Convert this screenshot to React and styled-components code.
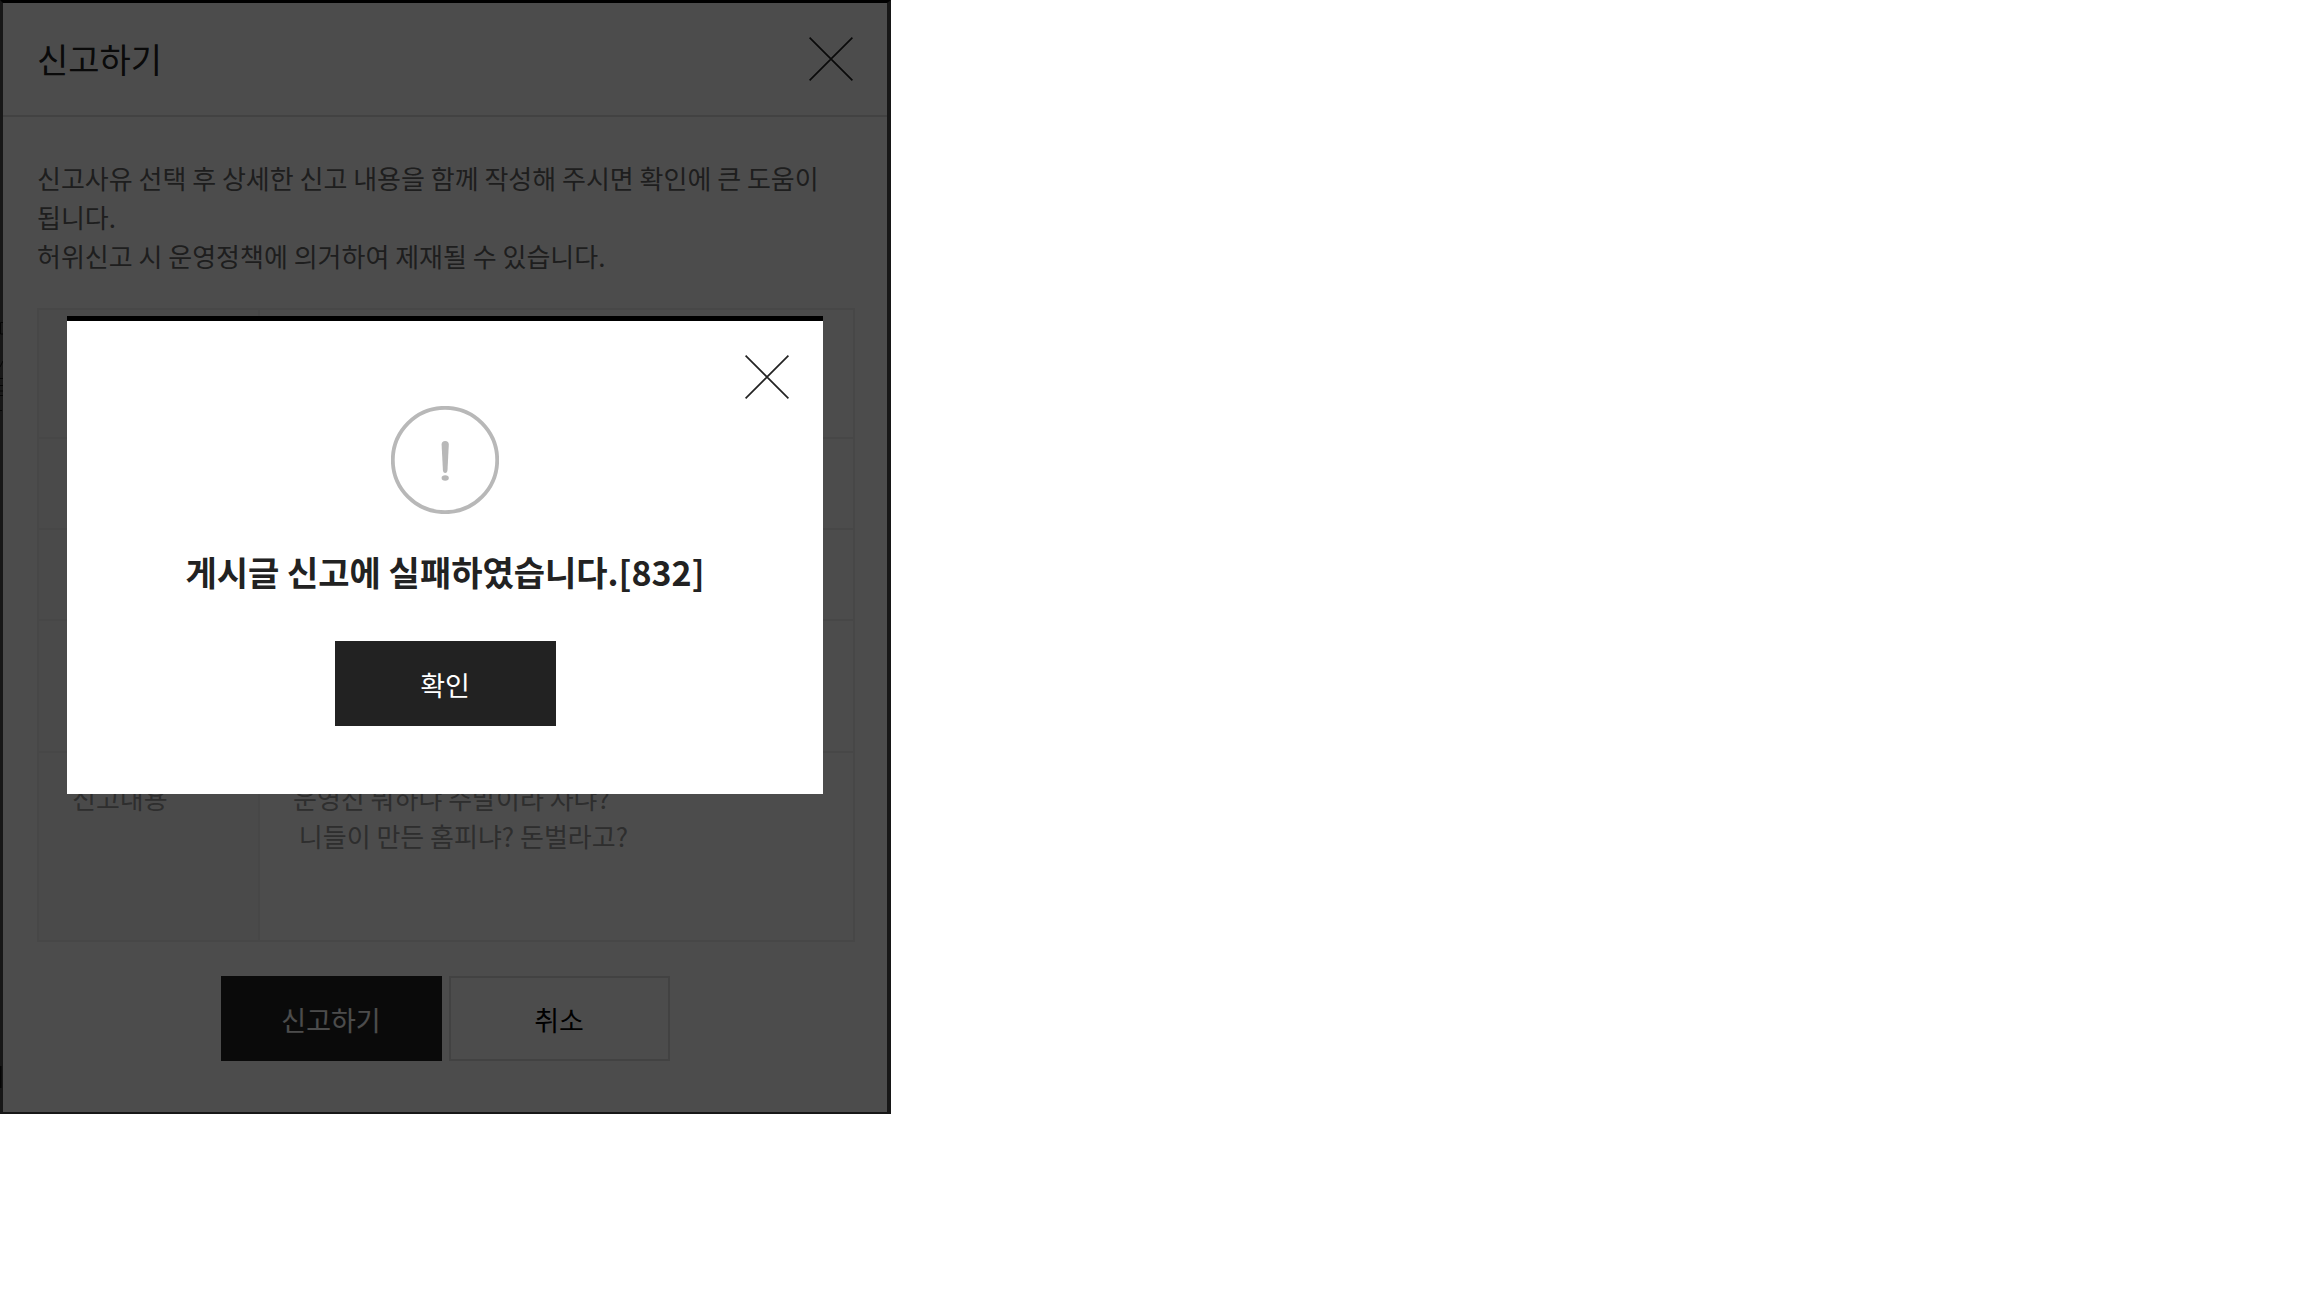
import React, { useState } from 'react'
import styled, { createGlobalStyle } from 'styled-components'

const GlobalStyle = createGlobalStyle`
    * {
        box-sizing: border-box;
    }
    body {
        margin: 0;
        background: #fff;
        color: #222;
        font-family: 'Noto Sans CJK KR', sans-serif;
        font-size: 26px;
        line-height: 38px;
        word-break: keep-all;
    }
`

const Popup = styled.div`
    position: relative;
    width: 100%;
    max-width: 891px;
`

const Window = styled.div`
    background: #fff;
    border: solid #4d4d4d;
    border-top-color: #000;
    border-width: 3px 4px 2px 3px;
`

const Header = styled.header`
    display: flex;
    align-items: center;
    justify-content: space-between;
    height: 114px;
    padding: 0 34px;
    border-bottom: 2px solid #ddd;
`

const Title = styled.h1`
    margin: 0;
    font-size: 34px;
    line-height: 50px;
    font-weight: 400;
`

const CloseButton = styled.button`
    display: block;
    width: 44px;
    height: 44px;
    padding: 0;
    border: 0;
    background: none;
    cursor: pointer;

    svg {
        display: block;
    }
`

const Content = styled.div`
    padding: 41px 32px 34px 34px;
`

const Guide = styled.p`
    margin: 0 0 33px;
    color: #666;
    line-height: 39px;
`

const ReportTable = styled.table`
    width: 100%;
    table-layout: fixed;
    border-collapse: collapse;
`

const Row = styled.tr`
    height: ${props => props.$height}px;
`

const cell = `
    padding: 26px 33px;
    border: 2px solid #eee;
    color: #999;
    font-weight: 400;
    text-align: left;
    vertical-align: top;
`

const LabelCell = styled.th`
    ${cell}
    width: 221px;
    background: #f9f9f9;
`

const ValueCell = styled.td`
    ${cell}
    white-space: pre-wrap;
`

const Buttons = styled.div`
    display: flex;
    justify-content: center;
    gap: 7px;
    padding-bottom: 51px;
`

const Button = styled.button`
    width: 221px;
    height: 85px;
    padding: 2px 0 0;
    border: ${props => (props.$outline ? '2px solid #ddd' : '0')};
    background: ${props => (props.$outline ? '#fff' : '#222')};
    color: ${props => (props.$outline ? '#000' : '#fff')};
    font-family: inherit;
    font-size: 27px;
    line-height: 38px;
    cursor: pointer;
`

/* bits of the page behind that show through the left edge */
const Edge = styled.svg`
    position: absolute;
    top: 0;
    left: 0;
`

const Dim = styled.div`
    position: absolute;
    inset: 0;
    display: flex;
    align-items: center;
    justify-content: center;
    padding: 0 4px 4px 3px;
    background: rgba(0, 0, 0, 0.7);
`

const Alert = styled.div`
    display: flex;
    flex-direction: column;
    align-items: center;
    width: 756px;
    padding: 34px 34px 68px;
    border-top: 5px solid #000;
    background: #fff;

    ${CloseButton} {
        align-self: flex-end;
    }
`

const AlertIcon = styled.svg`
    display: block;
    margin-top: 7px;
`

const AlertText = styled.p`
    margin: 32px 0 43px;
    font-size: 34px;
    line-height: 52px;
    font-weight: 700;
    text-align: center;
`

const rows = [
    { height: 129 },
    { height: 91 },
    { height: 91 },
    { height: 132 },
    {
        height: 189,
        label: '신고내용',
        value: '운영진 뭐하냐 주말이라 자냐?\n 니들이 만든 홈피냐? 돈벌라고?',
    },
]

const Close = props => (
    <CloseButton type="button" aria-label="닫기" onClick={props.clicked}>
        <svg width="44" height="44" viewBox="0 0 44 44" stroke="#222" strokeWidth="1.7">
            <path d="M.6.6l42.8 42.8M43.4.6L.6 43.4" />
        </svg>
    </CloseButton>
)

const App = () => {
    const [alert, setAlert] = useState(true)

    return (
        <>
            <GlobalStyle />
            <Popup>
                <Window>
                    <Header>
                        <Title>신고하기</Title>
                        <Close />
                    </Header>
                    <Content>
                        <Guide>
                            신고사유 선택 후 상세한 신고 내용을 함께 작성해 주시면 확인에 큰 도움이 됩니다.
                            <br />
                            허위신고 시 운영정책에 의거하여 제재될 수 있습니다.
                        </Guide>
                        <ReportTable>
                            <tbody>
                                {rows.map((row, i) => (
                                    <Row key={i} $height={row.height}>
                                        <LabelCell scope="row">{row.label}</LabelCell>
                                        <ValueCell>{row.value}</ValueCell>
                                    </Row>
                                ))}
                            </tbody>
                        </ReportTable>
                    </Content>
                    <Buttons>
                        <Button type="button" onClick={() => setAlert(true)}>신고하기</Button>
                        <Button type="button" $outline>취소</Button>
                    </Buttons>
                </Window>
                <Edge width="3" height="1100" viewBox="0 0 3 1100" fill="none" stroke="#111" aria-hidden="true">
                    <path d="M3 322.5H.5v11.5H3M3 361l-3 6M0 378.5h3M0 385.5h3M0 391h3M0 395.5h3M0 410.5h2" />
                    <path d="M.5 1066v22" strokeWidth="2" />
                </Edge>
                {alert && (
                    <Dim>
                        <Alert role="alertdialog" aria-labelledby="alert-text">
                            <Close clicked={() => setAlert(false)} />
                            <AlertIcon width="108" height="108" viewBox="0 0 108 108" fill="#b8b8b8">
                                <circle cx="54" cy="54" r="52.2" fill="none" stroke="#b8b8b8" strokeWidth="3.8" />
                                <path d="M50.6 38.5q0-3.5 3.6-3.5t3.6 3.5l-1.3 25.5q-.2 3-2.3 3t-2.3-3z" />
                                <ellipse cx="54.2" cy="72" rx="3.6" ry="2.7" />
                            </AlertIcon>
                            <AlertText id="alert-text">게시글 신고에 실패하였습니다.[832]</AlertText>
                            <Button type="button" onClick={() => setAlert(false)}>확인</Button>
                        </Alert>
                    </Dim>
                )}
            </Popup>
        </>
    )
}

export default App
